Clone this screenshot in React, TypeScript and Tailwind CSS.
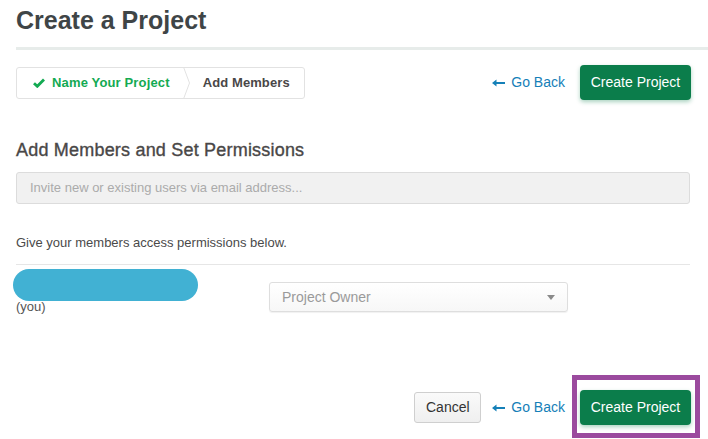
import React from "react";

function ArrowLeft() {
  return (
    <svg width="13" height="8" viewBox="0 0 13 8" className="shrink-0">
      <path d="M0 4 L4.5 0.5 L4.5 3 L13 3 L13 5 L4.5 5 L4.5 7.5 Z" fill="currentColor" />
    </svg>
  );
}

function GoBack() {
  return (
    <a className="flex items-center gap-[6px] text-[14px] text-[#1580b8] cursor-pointer">
      <ArrowLeft />
      <span>Go Back</span>
    </a>
  );
}

function CreateButton() {
  return (
    <button className="w-[111px] h-[35px] rounded-[4px] bg-[#0b7d4b] text-white text-[14px] shadow-[0_2px_4px_rgba(11,125,75,0.35)]">
      Create Project
    </button>
  );
}

export default function App() {
  return (
    <div
      className="relative w-[708px] h-[439px] bg-white overflow-hidden"
      style={{ fontFamily: '"Liberation Sans", Arial, sans-serif' }}
    >
      <div className="pl-4 pt-[5px]">
        <h1 className="text-[25px] leading-[30px] font-bold text-[#3f4547]">Create a Project</h1>
      </div>
      <div className="ml-4 mt-[12px] h-[3px] bg-[#e7ecea]" />

      <div className="pl-4 pr-[17px] mt-[15px] flex items-center justify-between">
        <div className="flex items-stretch h-[32px] border border-[#e2e2e2] rounded-[3px] text-[13px] font-bold">
          <div className="flex items-center pl-[16px] pr-[13px] text-[#13aa52] gap-[7px]">
            <svg width="12" height="10" viewBox="0 0 12 10">
              <path d="M1 5.2 L4.3 8.3 L11 1.5" stroke="#13aa52" strokeWidth="2.8" fill="none" />
            </svg>
            <span className="tracking-[0.15px]">Name Your Project</span>
          </div>
          <svg width="8" height="32" viewBox="0 0 8 32" className="-my-px shrink-0">
            <polyline points="0.5,0 6.5,16 0.5,32" stroke="#e2e2e2" strokeWidth="1" fill="none" />
          </svg>
          <div className="flex items-center pl-[12px] pr-[14px] text-[#494747] tracking-[0.1px]">Add Members</div>
        </div>
        <div className="flex items-center gap-[15px]">
          <GoBack />
          <CreateButton />
        </div>
      </div>

      <div className="pl-4 pr-[18px]">
        <h2 className="mt-[38px] text-[18px] leading-[24px] font-medium text-[#494747] tracking-[0.2px] [-webkit-text-stroke:0.35px_#494747]">
          Add Members and Set Permissions
        </h2>
        <div className="mt-[10px] h-[32px] bg-[#f1f1f1] border border-[#dcdcdc] rounded-[3px] flex items-center pl-[13px] text-[13px] text-[#ababab]">
          Invite new or existing users via email address...
        </div>
        <p className="mt-[30px] text-[13px] leading-[18px] text-[#4a4a4a]">
          Give your members access permissions below.
        </p>
        <div className="mt-[12px] h-px bg-[#e6e6e6]" />
        <div className="flex">
          <div className="w-[253px]">
            <div className="mt-[4px] -ml-[3px] h-[32px] w-[185px] rounded-full bg-[#41b1d3]" />
            <div className="text-[13px] leading-[12px] text-[#555]">(you)</div>
          </div>
          <div className="mt-[17px] w-[299px] h-[30px] border border-[#dedede] rounded-[3px] bg-gradient-to-b from-white to-[#f7f7f7] shadow-[0_1px_1px_rgba(0,0,0,0.06)] flex items-center justify-between pl-[12px] pr-[12px] text-[14px] text-[#9a9a9a]">
            <span>Project Owner</span>
            <svg width="8" height="5" viewBox="0 0 8 5">
              <path d="M0 0 L8 0 L4 5 Z" fill="#8a8a8a" />
            </svg>
          </div>
        </div>
      </div>

      <div className="pr-[17px] mt-[77px] flex items-center justify-end">
        <button className="w-[67px] h-[31px] border border-[#cfcfcf] rounded-[3px] bg-gradient-to-b from-[#fafafa] to-[#efefef] text-[14px] text-[#333] mr-[11px]">
          Cancel
        </button>
        <div className="mr-[15px]">
          <GoBack />
        </div>
        <CreateButton />
      </div>

      <div className="absolute left-[572px] top-[375px] w-[128px] h-[63px] border-[5px] border-[#9b4a9e]" />
    </div>
  );
}
